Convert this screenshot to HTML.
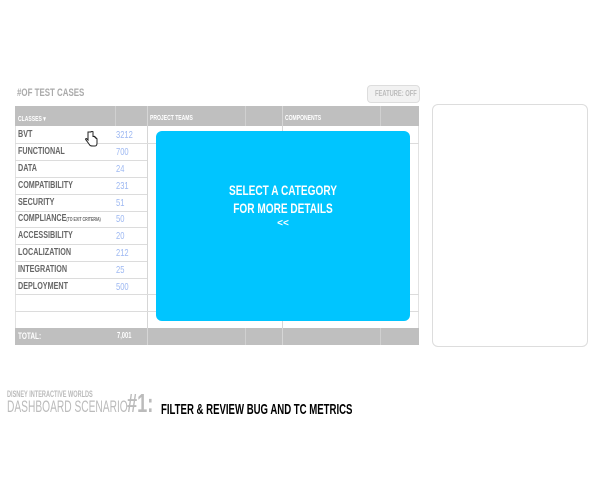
<!DOCTYPE html>
<html><head><style>
body{margin:0;width:600px;height:480px;background:#fff;position:relative;overflow:hidden;font-family:"Liberation Sans",sans-serif;}
.a{position:absolute;white-space:nowrap;}
.c{font-weight:bold;transform-origin:0 50%;transform:scaleX(0.72);display:inline-block;}
.hl{position:absolute;height:1px;background:#dcdcdc;}
.vl{position:absolute;width:1px;background:#dcdcdc;}
.lab{position:absolute;left:18px;font-size:10px;color:#666;}
.num{position:absolute;left:116px;font-size:10.5px;color:#9db8f2;}
</style></head><body>
<div class="a" style="left:17px;top:87px;font-size:11px;color:#aaa;"><span class="c">#OF TEST CASES</span></div>
<div class="a" style="left:367px;top:85px;width:51px;height:16px;border:1px solid #ddd;border-radius:4px;background:#f2f2f2;font-size:8px;color:#bbb;line-height:16px;"><span class="c" style="margin-left:7px">FEATURE: OFF</span></div>
<div class="a" style="left:15px;top:106px;width:404px;height:239px;border:1px solid #e2e2e2;box-sizing:border-box;"></div>
<div class="a" style="left:15px;top:106px;width:404px;height:20px;background:#bfbfbf;"></div>
<div class="a" style="left:15px;top:328px;width:404px;height:17px;background:#bfbfbf;"></div>
<div class="vl" style="left:115px;top:106px;height:20px;background:#d0d0d0"></div>
<div class="vl" style="left:147px;top:106px;height:239px;background:#d6d6d6"></div>
<div class="vl" style="left:245px;top:106px;height:20px;background:#d0d0d0"></div>
<div class="vl" style="left:245px;top:328px;height:17px;background:#d0d0d0"></div>
<div class="vl" style="left:282px;top:106px;height:239px;background:#d6d6d6"></div>
<div class="vl" style="left:380px;top:106px;height:20px;background:#d0d0d0"></div>
<div class="vl" style="left:380px;top:328px;height:17px;background:#d0d0d0"></div>
<div class="a" style="left:18px;top:115px;font-size:7px;color:#fff;"><span class="c">CLASSES ▾</span></div>
<div class="a" style="left:150px;top:115px;font-size:7px;color:#fff;"><span class="c">PROJECT TEAMS</span></div>
<div class="a" style="left:285px;top:115px;font-size:7px;color:#fff;"><span class="c">COMPONENTS</span></div>
<div class="hl" style="left:15px;top:143px;width:404px"></div>
<div class="hl" style="left:15px;top:160px;width:132px"></div>
<div class="hl" style="left:15px;top:177px;width:132px"></div>
<div class="hl" style="left:15px;top:194px;width:132px"></div>
<div class="hl" style="left:15px;top:211px;width:132px"></div>
<div class="hl" style="left:15px;top:227px;width:132px"></div>
<div class="hl" style="left:15px;top:244px;width:132px"></div>
<div class="hl" style="left:15px;top:261px;width:132px"></div>
<div class="hl" style="left:15px;top:278px;width:132px"></div>
<div class="hl" style="left:15px;top:294px;width:404px"></div>
<div class="hl" style="left:15px;top:311px;width:404px"></div>
<div class="lab" style="top:129px"><span class="c">BVT</span></div><div class="num" style="top:129px"><span class="c" style="font-weight:normal">3212</span></div>
<div class="lab" style="top:146px"><span class="c">FUNCTIONAL</span></div><div class="num" style="top:146px"><span class="c" style="font-weight:normal">700</span></div>
<div class="lab" style="top:163px"><span class="c">DATA</span></div><div class="num" style="top:163px"><span class="c" style="font-weight:normal">24</span></div>
<div class="lab" style="top:180px"><span class="c">COMPATIBILITY</span></div><div class="num" style="top:180px"><span class="c" style="font-weight:normal">231</span></div>
<div class="lab" style="top:197px"><span class="c">SECURITY</span></div><div class="num" style="top:197px"><span class="c" style="font-weight:normal">51</span></div>
<div class="lab" style="top:213px"><span class="c">COMPLIANCE<span style="font-size:5px">(TO EXIT CRITERIA)</span></span></div><div class="num" style="top:213px"><span class="c" style="font-weight:normal">50</span></div>
<div class="lab" style="top:230px"><span class="c">ACCESSIBILITY</span></div><div class="num" style="top:230px"><span class="c" style="font-weight:normal">20</span></div>
<div class="lab" style="top:247px"><span class="c">LOCALIZATION</span></div><div class="num" style="top:247px"><span class="c" style="font-weight:normal">212</span></div>
<div class="lab" style="top:264px"><span class="c">INTEGRATION</span></div><div class="num" style="top:264px"><span class="c" style="font-weight:normal">25</span></div>
<div class="lab" style="top:281px"><span class="c">DEPLOYMENT</span></div><div class="num" style="top:281px"><span class="c" style="font-weight:normal">500</span></div>
<div class="a" style="left:18px;top:331px;font-size:9px;color:#fff;"><span class="c">TOTAL:</span></div>
<div class="a" style="left:117px;top:331px;font-size:8px;color:#fff;"><span class="c">7,001</span></div>
<svg class="a" style="left:84px;top:131px" width="14" height="16" viewBox="0 0 14 16"><path d="M4 1v8l-1-1c-1-1-2 0-1 1l3 4c1 2 2 2 4 2h2c2 0 2-2 2-3V8c0-1-1-1-1 0V7c0-1-1-1-1 0V6c0-1-1-1-1 0V6c0-1-1-1-1 0V1c0-1-2-1-2 0z" fill="#fff" stroke="#222" stroke-width="1"/></svg>
<div class="a" style="left:156px;top:131px;width:254px;height:190px;background:#00c5ff;border-radius:6px;"></div>
<div class="a" style="left:156px;top:181px;width:254px;text-align:center;color:#fff;font-size:14px;font-weight:bold;line-height:18px;"><div style="transform:scaleX(0.72)">SELECT A CATEGORY<br>FOR MORE DETAILS</div><div style="font-size:10px;line-height:14px;">&lt;&lt;</div></div>
<div class="a" style="left:432px;top:104px;width:156px;height:243px;border:1px solid #ddd;border-radius:6px;box-sizing:border-box;"></div>
<div class="a" style="left:7px;top:389px;font-size:9px;color:#bbb;"><span class="c" style="transform:scaleX(0.62)">DISNEY INTERACTIVE WORLDS</span></div>
<div class="a" style="left:7px;top:397px;font-size:17px;color:#bbb;"><span class="c" style="font-weight:normal;transform:scaleX(0.6)">DASHBOARD SCENARIO</span></div>
<div class="a" style="left:127px;top:388px;font-size:26px;color:#bbb;"><span class="c" style="transform:scaleX(0.7)">#1:</span></div>
<div class="a" style="left:161px;top:401px;font-size:15px;color:#000;"><span class="c" style="transform:scaleX(0.64)">FILTER &amp; REVIEW BUG AND TC METRICS</span></div>
</body></html>
